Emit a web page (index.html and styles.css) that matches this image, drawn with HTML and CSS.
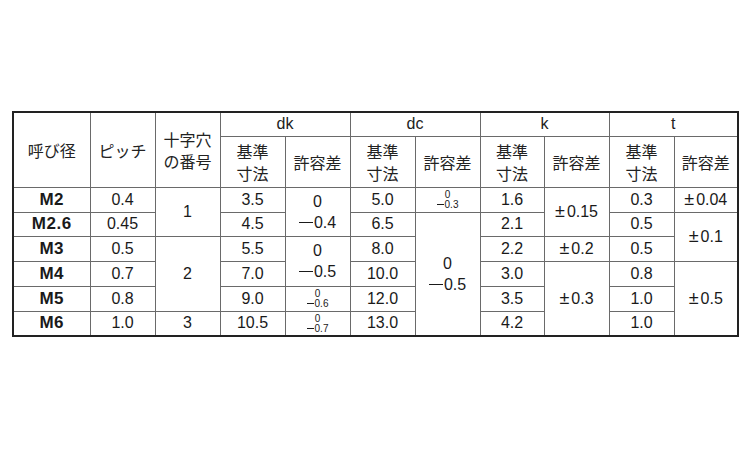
FILE: index.html
```html
<!DOCTYPE html>
<html lang="ja">
<head>
<meta charset="utf-8">
<link rel="stylesheet" href="styles.css">
</head>
<body>
<table class="spec">
  <colgroup>
    <col class="c77"><col class="c65"><col class="c65"><col class="c65"><col class="c65"><col class="c65"><col class="c65"><col class="c64"><col class="c65"><col class="c65"><col class="c64">
  </colgroup>
  <thead>
    <tr class="h1">
      <th rowspan="2">呼び径</th>
      <th rowspan="2">ピッチ</th>
      <th rowspan="2" class="two">十字穴<br>の番号</th>
      <th colspan="2" class="lat">dk</th>
      <th colspan="2" class="lat">dc</th>
      <th colspan="2" class="lat">k</th>
      <th colspan="2" class="lat">t</th>
    </tr>
    <tr class="h2">
      <th class="two">基準<br>寸法</th><th>許容差</th>
      <th class="two">基準<br>寸法</th><th>許容差</th>
      <th class="two">基準<br>寸法</th><th>許容差</th>
      <th class="two">基準<br>寸法</th><th>許容差</th>
    </tr>
  </thead>
  <tbody>
    <tr class="r25">
      <td class="nom">M2</td><td>0.4</td><td rowspan="2">1</td>
      <td>3.5</td><td rowspan="2" class="tol">0<br><span class="mi"></span>0.4</td>
      <td>5.0</td><td class="sm"><div>0</div><div><span class="smi"></span>0.3</div></td>
      <td>1.6</td><td rowspan="2"><span class="pm">±</span>0.15</td>
      <td>0.3</td><td><span class="pm">±</span>0.04</td>
    </tr>
    <tr class="r24">
      <td class="nom">M2.6</td><td>0.45</td>
      <td>4.5</td>
      <td>6.5</td><td rowspan="5" class="tol">0<br><span class="mi"></span>0.5</td>
      <td>2.1</td>
      <td>0.5</td><td rowspan="2"><span class="pm">±</span>0.1</td>
    </tr>
    <tr class="r25">
      <td class="nom">M3</td><td>0.5</td><td rowspan="3">2</td>
      <td>5.5</td><td rowspan="2" class="tol">0<br><span class="mi"></span>0.5</td>
      <td>8.0</td>
      <td>2.2</td><td><span class="pm">±</span>0.2</td>
      <td>0.5</td>
    </tr>
    <tr class="r25">
      <td class="nom">M4</td><td>0.7</td>
      <td>7.0</td>
      <td>10.0</td>
      <td>3.0</td><td rowspan="3"><span class="pm">±</span>0.3</td>
      <td>0.8</td><td rowspan="3"><span class="pm">±</span>0.5</td>
    </tr>
    <tr class="r25">
      <td class="nom">M5</td><td>0.8</td>
      <td>9.0</td><td class="sm"><div>0</div><div><span class="smi"></span>0.6</div></td>
      <td>12.0</td>
      <td>3.5</td>
      <td>1.0</td>
    </tr>
    <tr class="r25">
      <td class="nom">M6</td><td>1.0</td><td>3</td>
      <td>10.5</td><td class="sm"><div>0</div><div><span class="smi"></span>0.7</div></td>
      <td>13.0</td>
      <td>4.2</td>
      <td>1.0</td>
    </tr>
  </tbody>
</table>
</body>
</html>
```

FILE: styles.css
```css
html, body {
  margin: 0;
  padding: 0;
  background: #ffffff;
}
body {
  padding: 111px 0 0 12px;
  font-family: "Liberation Sans", "Noto Sans CJK JP", sans-serif;
  color: #1a1a1a;
}
.spec {
  border-collapse: collapse;
  table-layout: fixed;
  width: 726px;
  border: 2px solid #222222;
}
.c77 { width: 77px; }
.c65 { width: 65px; }
.c64 { width: 64px; }
.spec th, .spec td {
  border: 1px solid #6a6a6a;
  padding: 0;
  text-align: center;
  vertical-align: middle;
  font-weight: normal;
  font-size: 16px;
  line-height: 18px;
}
.spec th {
  font-family: "Noto Sans CJK JP", "Liberation Sans", sans-serif;
  font-size: 16px;
  color: #222222;
}
.spec th.lat {
  font-family: "Liberation Sans", sans-serif;
  font-size: 16px;
}
.h1 { height: 24px; }
.h1 th { line-height: 20px; }
.h2 { height: 51px; }
.spec th.two {
  line-height: 22px;
}
.r25 { height: 25px; }
.r24 { height: 24px; }
.spec td.nom {
  font-weight: bold;
  font-size: 17px;
  letter-spacing: 0.5px;
}
.spec td.tol {
  line-height: 21px;
}
.mi {
  display: inline-block;
  width: 14px;
  height: 0;
  border-top: 1.5px solid #1a1a1a;
  vertical-align: 5px;
  margin-right: 1px;
}
.spec td.sm {
  font-size: 10px;
  line-height: 10px;
  padding-top: 1px;
}
.smi {
  display: inline-block;
  width: 7px;
  height: 0;
  border-top: 1px solid #1a1a1a;
  vertical-align: 3px;
  margin-right: 1px;
}
.pm {
  font-size: 18px;
  margin-right: 2px;
}
```
